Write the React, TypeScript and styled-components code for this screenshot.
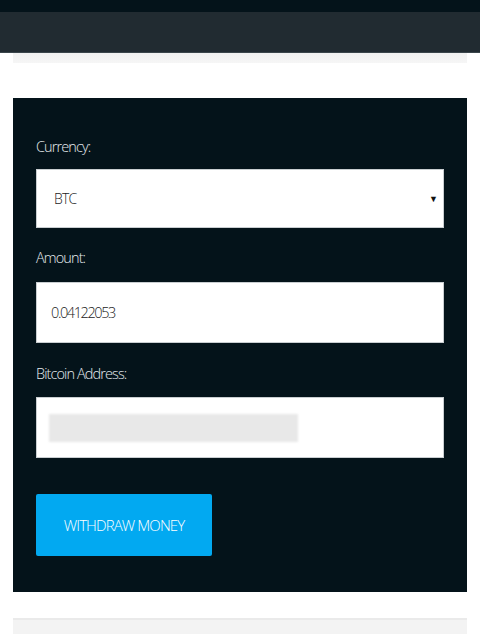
import React from "react";
import styled, { createGlobalStyle } from "styled-components";

const Global = createGlobalStyle`
  html, body { margin: 0; padding: 0; background: #ffffff; }
  body { font-family: "Open Sans", "Liberation Sans", sans-serif; }
  * { box-sizing: border-box; }
`;

const Page = styled.div`
  display: flex;
  flex-direction: column;
  width: 480px;
  height: 634px;
  overflow: hidden;
  background: #ffffff;
`;

const TopBar = styled.div`
  height: 12px;
  background: #04131a;
`;

const NavBar = styled.div`
  height: 41px;
  background: #212b31;
  border-bottom: 1px solid #3a454b;
`;

const Container = styled.div`
  display: flex;
  flex-direction: column;
  padding: 0 13px;
  flex: 1;
`;

const Strip = styled.div`
  height: 10px;
  background: linear-gradient(#f1f1f1, #f6f6f6);
  margin-bottom: 35px;
`;

const Panel = styled.form`
  display: flex;
  flex-direction: column;
  background: #04131a;
  padding: 39px 23px 36px;
`;

const Label = styled.label<{ $gap: number; $top: number }>`
  display: block;
  color: #e6ecef;
  font-size: 14.5px;
  font-weight: 300;
  letter-spacing: -0.9px;
  line-height: 20px;
  margin-top: ${(p) => p.$top}px;
  margin-bottom: ${(p) => p.$gap}px;
`;

const Field = styled.div<{ $h: number; $pad: number }>`
  display: flex;
  align-items: center;
  justify-content: space-between;
  height: ${(p) => p.$h}px;
  background: #ffffff;
  border: 1px solid #c9ced1;
  padding: 0 5px 0 ${(p) => p.$pad}px;
  color: #222;
  font-size: 14px;
  font-weight: 300;
  letter-spacing: -0.8px;
`;

const Value = styled.span<{ $size: number; $track: number }>`
  font-size: ${(p) => p.$size}px;
  letter-spacing: ${(p) => p.$track}px;
`;

const Arrow = styled.span`
  font-size: 9px;
  color: #111;
  letter-spacing: 0;
`;

const Blurred = styled.div`
  width: 249px;
  height: 28px;
  background: #e8e8e8;
  filter: blur(0.8px);
`;

const Button = styled.button`
  margin-top: 36px;
  align-self: flex-start;
  width: 176px;
  height: 62px;
  background: #02a9f1;
  border: none;
  border-radius: 2px;
  color: #ffffff;
  font-family: "Open Sans", "Liberation Sans", sans-serif;
  font-size: 15px;
  font-weight: 300;
  letter-spacing: -0.9px;
  text-transform: uppercase;
  padding: 0;
`;

const BottomStrip = styled.div`
  margin-top: 26px;
  flex: 1;
  background: #f3f3f3;
  border-top: 2px solid #eaeaea;
`;

export default function App() {
  return (
    <Page>
      <Global />
      <TopBar />
      <NavBar />
      <Container>
        <Strip />
        <Panel onSubmit={(e) => e.preventDefault()}>
          <Label $top={0} $gap={12}>Currency:</Label>
          <Field $h={59} $pad={17}>
            <Value $size={14} $track={-0.8}>BTC</Value>
            <Arrow>▼</Arrow>
          </Field>
          <Label $top={20} $gap={14}>Amount:</Label>
          <Field $h={61} $pad={14}>
            <Value $size={14.5} $track={-1.4}>0.04122053</Value>
          </Field>
          <Label $top={21} $gap={13}>Bitcoin Address:</Label>
          <Field $h={61} $pad={12}>
            <Blurred />
          </Field>
          <Button type="submit">Withdraw Money</Button>
        </Panel>
        <BottomStrip />
      </Container>
    </Page>
  );
}
